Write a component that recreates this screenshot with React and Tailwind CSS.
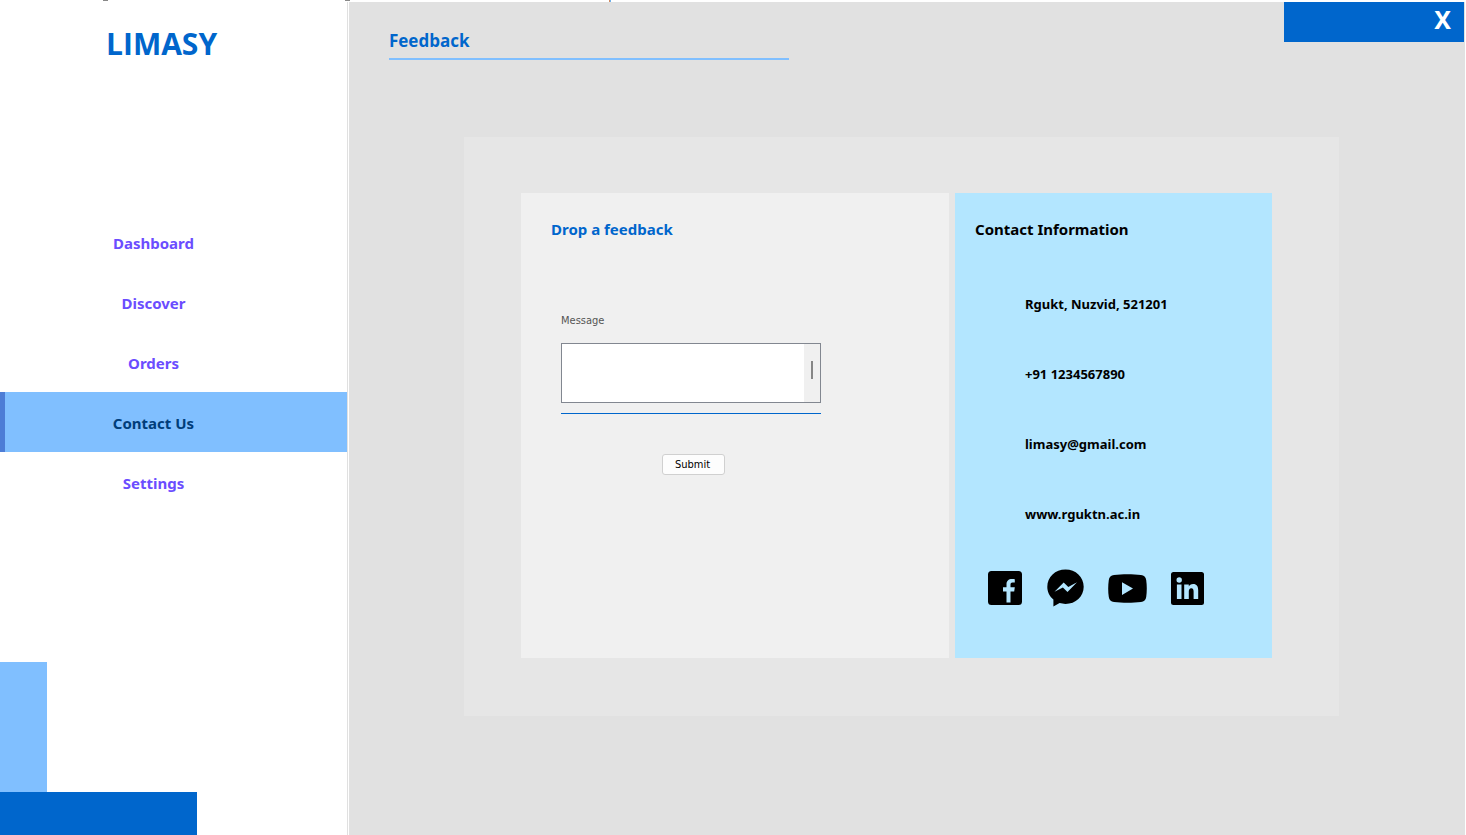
const navItems = ["Dashboard", "Discover", "Orders", "Contact Us", "Settings"];

const contacts = [
  { text: "Rgukt, Nuzvid, 521201" },
  { text: "+91 1234567890", href: "tel:+911234567890" },
  { text: "limasy@gmail.com", href: "mailto:limasy@gmail.com" },
  { text: "www.rguktn.ac.in", href: "#website" },
];

function FacebookIcon() {
  return (
    <svg viewBox="0 0 34 34" className="h-[34px] w-[34px]" aria-hidden="true">
      <path fillRule="evenodd" d="M3.500 0h27A3.500 3.500 0 0 1 34 3.500v27a3.500 3.500 0 0 1-3.500 3.500H22.500V20.500h3.700l.6-4.200h-4.300v-2.800c0-1.300.6-2.100 2-2.100h2.300V8.200c-.8-.2-1.700-.3-2.800-.3-3.600 0-5.500 2-5.500 5.200v3.200h-3.500v4.200h3.500V31.500h4V34H3.500A3.500 3.500 0 0 1 0 30.500v-27A3.500 3.500 0 0 1 3.500 0z" />
    </svg>
  );
}

function MessengerIcon() {
  return (
    <svg viewBox="-1 0 38 38" className="h-[38px] w-[38px]" aria-hidden="true">
      <path fillRule="evenodd" d="M18.500 0.500C8.300 0.500 0.300 7.900 0.300 17.700c0 5.200 2.300 9.700 6.100 12.800V37.500l6.200-3.400c1.900.5 3.800.8 5.900.8 10.200 0 18.200-7.400 18.200-17.200S28.700.5 18.500.5zM7.500 22.800l9.200-9.400 4.600 4.600 8.700-4.800-9.500 9.900-4.600-4.600z" />
    </svg>
  );
}

function YoutubeIcon() {
  return (
    <svg viewBox="0 0 39 29" className="h-[29px] w-[39px]" aria-hidden="true">
      <path fillRule="evenodd" d="M6 .9C14 0 25 0 33 .9c3 .3 4.800 2 5.200 5 .8 5.700.8 11.500 0 17.200-.4 3-2.200 4.700-5.200 5-8 .9-19 .9-27 0-3-.3-4.800-2-5.200-5C0 17.400 0 11.600.8 5.900 1.200 2.900 3 1.200 6 .9zM14 8.300v12.600l11-6.300z" />
    </svg>
  );
}

function LinkedinIcon() {
  return (
    <svg viewBox="0 0 33 33" className="h-[33px] w-[33px]" aria-hidden="true">
      <path fillRule="evenodd" d="M2.500 0h28A2.500 2.500 0 0 1 33 2.500v28a2.500 2.500 0 0 1-2.500 2.500h-28A2.500 2.500 0 0 1 0 30.500v-28A2.500 2.500 0 0 1 2.500 0zM8.200 5.300a2.700 2.700 0 1 0 0 5.400 2.700 2.700 0 0 0 0-5.400zM5.900 12.500V27h4.600V12.500zM13.200 12.500V27h4.600v-7.500c0-2 .7-3.300 2.500-3.300s2.300 1.500 2.300 3.400V27h4.600v-8.500c0-4-1.400-6.400-5.100-6.400-2.200 0-3.600 1-4.300 2.400v-2z" />
    </svg>
  );
}

export default function App() {
  return (
    <div className="flex min-h-screen flex-col bg-white font-['Noto_Sans',sans-serif]">
      <svg className="h-[2px] w-full" aria-hidden="true">
        <path d="M103 0h5v1h-5zM345 0h5v1h-5z" fill="#888" />
        <path d="M609 0h1v2h-1z" fill="#d08a60" />
        <path d="M610 0h1v2h-1z" fill="#70b0e8" />
      </svg>
      <div className="flex flex-1">
        <aside className="mr-px flex w-[348px] shrink-0 flex-col border-r border-[#e0e0e0]">
          <h1 className="pt-[22px] pl-[106px] font-['Open_Sans',sans-serif] text-[30px] leading-10 font-bold text-[#0066cc]">
            LIMASY
          </h1>
          <nav className="mt-[148px] flex flex-col">
            {navItems.map((item) => (
              <a
                key={item}
                href="#"
                className={
                  "flex h-[60px] items-center justify-center border-l-[5px] pt-0.5 pr-[45px] text-[15px] font-bold " +
                  (item === "Contact Us"
                    ? "border-[#4d7dd6] bg-[#80bfff] text-[#003d7a]"
                    : "border-transparent text-[#6b4dff]")
                }
              >
                {item}
              </a>
            ))}
          </nav>
          <div className="mt-auto h-[130px] w-[47px] bg-[#80bfff]" />
          <div className="h-[43px] w-[197px] bg-[#0066cc]" />
        </aside>

        <main className="mr-px flex-1 bg-[#e1e1e1]">
          <header className="flex items-start justify-between pr-px pl-10">
            <h2 className="w-[400px] border-b-2 border-[#80bfff] pt-[27px] pb-[5px] font-['Open_Sans',sans-serif] text-[17px] leading-6 font-bold text-[#0066cc]">
              Feedback
            </h2>
            <div className="flex h-10 w-[180px] items-center justify-end bg-[#0066cc] pr-[13px]">
              <button type="button" aria-label="Close" className="pb-1.5 text-[25px] leading-8 font-bold text-white">
                X
              </button>
            </div>
          </header>

          <section className="mt-[77px] mr-[126px] ml-[115px] grid grid-cols-[428fr_317fr] gap-1.5 bg-[#e6e6e6] pt-14 pr-[67px] pb-[58px] pl-[57px]">
            <form className="bg-[#f0f0f0] pt-6 pl-[30px]">
              <h3 className="text-[15px] leading-6 font-bold text-[#0066cc]">Drop a feedback</h3>
              <div className="ml-2.5 flex w-[260px] flex-col">
                <label htmlFor="message" className="mt-[72px] font-['DejaVu_Sans_Condensed','DejaVu_Sans',sans-serif] text-[11px] leading-4 text-[#555]">
                  Message
                </label>
                <div className="mt-3.5 flex h-[60px] border border-[#828790] bg-white">
                  <textarea id="message" className="min-w-0 flex-1 resize-none p-1 text-xs outline-none" />
                  <div className="w-4 bg-[#f0f0f0] pt-[17px] pl-[7px]">
                    <div className="h-[18px] w-[2px] bg-[#868686]" />
                  </div>
                </div>
                <div className="mt-2.5 h-px bg-[#0066cc]" />
                <button
                  type="submit"
                  className="mt-10 ml-[101px] h-[21px] w-[63px] rounded-[3px] border border-[#d0d0d0] bg-[#fdfdfd] pr-0.5 font-['DejaVu_Sans_Condensed','DejaVu_Sans',sans-serif] text-[11px] leading-4 text-black"
                >
                  Submit
                </button>
              </div>
            </form>

            <div className="bg-[#b3e6ff] pt-6 pb-[51px] pl-5 text-black">
              <h3 className="text-[15px] leading-6 font-bold">Contact Information</h3>
              <ul className="mt-[53px] ml-[50px] flex flex-col gap-[50px] text-[13px] leading-5 font-bold">
                {contacts.map((c) => (
                  <li key={c.text}>{c.href ? <a href={c.href}>{c.text}</a> : c.text}</li>
                ))}
              </ul>
              <div className="mt-[45px] ml-[13px] flex items-center gap-6">
                <a href="#facebook" aria-label="Facebook"><FacebookIcon /></a>
                <a href="#messenger" aria-label="Messenger"><MessengerIcon /></a>
                <a href="#youtube" aria-label="YouTube"><YoutubeIcon /></a>
                <a href="#linkedin" aria-label="LinkedIn"><LinkedinIcon /></a>
              </div>
            </div>
          </section>
        </main>
      </div>
    </div>
  );
}
